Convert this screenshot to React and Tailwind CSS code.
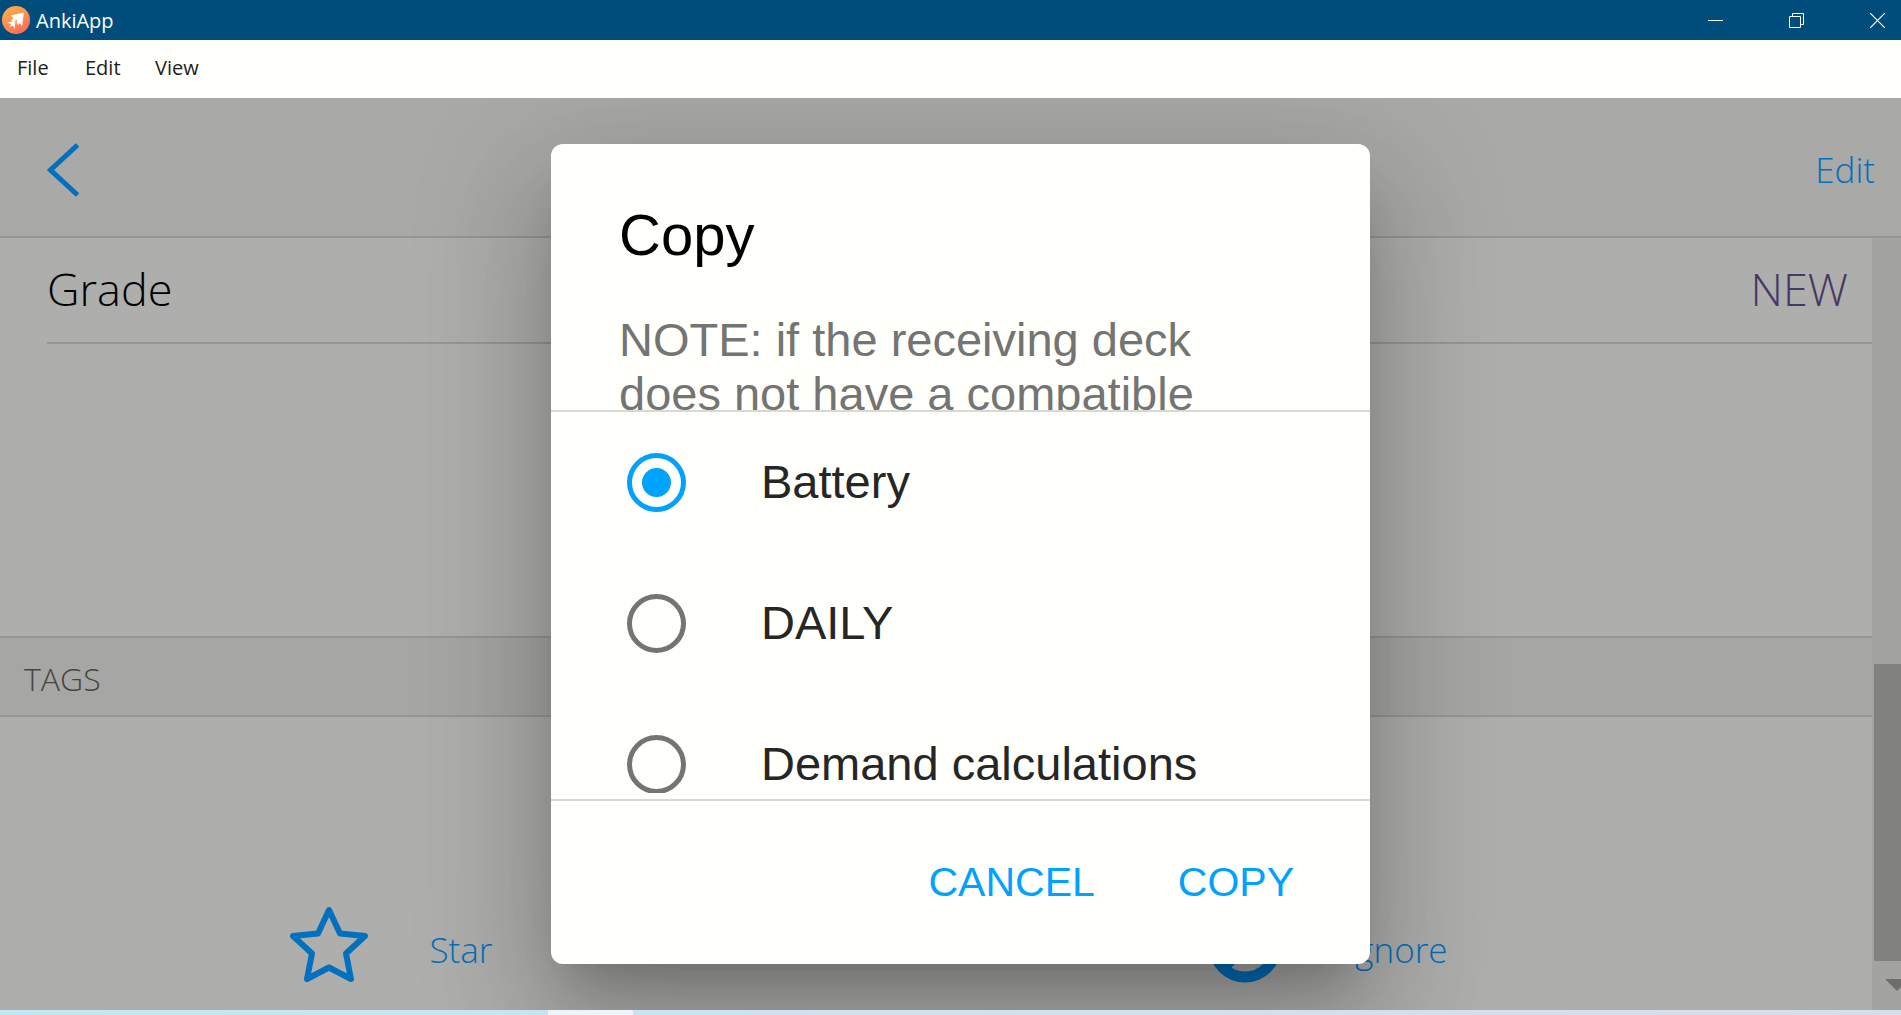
import { useState } from "react"

const DECKS = ["Battery", "DAILY", "Demand calculations"]

const MENU = [
  { label: "File", className: "w-[68px]" },
  { label: "Edit", className: "w-[70px]" },
  { label: "View", className: "w-[80px]" },
]

function Logo() {
  return (
    <svg className="h-7 w-7" viewBox="0 0 28 28" aria-hidden="true">
      <defs>
        <linearGradient id="logo" x1="0" y1="0" x2="0.6" y2="1">
          <stop offset="0" stopColor="#ffb648" />
          <stop offset="1" stopColor="#fb6f55" />
        </linearGradient>
      </defs>
      <circle cx="14" cy="14" r="14" fill="url(#logo)" />
      <path d="M22 6.500 L8 9.500 L11.500 12 L9 14.500 L11 16 L15 13.500 L14.500 17 L16 19 L18 17 L20 20.500 Z" fill="#fffefa" />
      <path d="M5 16.500 L13.500 15 L12.500 23 L11 19.500 L8 21 L9 18 Z" fill="#fffefa" />
    </svg>
  )
}

function TitleBar() {
  return (
    <header className="flex h-10 shrink-0 items-center justify-between bg-[#004d7b] pl-0.5 pr-4 text-white">
      <div className="flex items-center gap-1.5">
        <Logo />
        <h1 className="pt-0.5 text-[20px] leading-7">AnkiApp</h1>
      </div>
      <div className="flex items-center gap-[66px]">
        <button type="button" aria-label="Minimize">
          <svg className="block h-[15px] w-[15px]" viewBox="0 0 15 15" stroke="currentColor">
            <path d="M0 7.5H15" />
          </svg>
        </button>
        <button type="button" aria-label="Restore">
          <svg className="block h-[15px] w-[15px]" viewBox="0 0 15 15" fill="none" stroke="currentColor">
            <path d="M0.5 3.5H11.5V14.5H0.5Z M3.5 3.5V0.5H14.5V11.5H11.5" />
          </svg>
        </button>
        <button type="button" aria-label="Close">
          <svg className="block h-[15px] w-[15px]" viewBox="0 0 15 15" stroke="currentColor" strokeWidth="1.2">
            <path d="M0 0L15 15M15 0L0 15" />
          </svg>
        </button>
      </div>
    </header>
  )
}

function MenuBar() {
  return (
    <nav className="flex h-[58px] shrink-0 items-center bg-[#fffffc] pb-0.5 pl-[17px] text-[20px] text-[#1c1c1c]">
      {MENU.map((item) => (
        <button key={item.label} type="button" className={`text-left ${item.className}`}>
          {item.label}
        </button>
      ))}
    </nav>
  )
}

function StarIcon() {
  return (
    <svg className="h-[78px] w-[78px]" viewBox="0 0 78 78" fill="none" stroke="currentColor" strokeWidth="6" strokeLinejoin="round" aria-hidden="true">
      <path d="M39 4 L50 27.500 L75 30 L56 47.500 L61 73 L39 61.500 L17 73 L22 47.500 L3 30 L28 27.500 Z" />
    </svg>
  )
}

function IgnoreIcon() {
  return (
    <svg className="h-[78px] w-[78px]" viewBox="0 0 78 78" fill="none" stroke="currentColor" strokeWidth="11" aria-hidden="true">
      <circle cx="39" cy="40" r="31" />
      <path d="M18 61L60 19" />
    </svg>
  )
}

/** Card detail screen, dimmed while the dialog is open. */
function CardScreen() {
  return (
    <main className="flex min-h-0 flex-1 flex-col font-light">
      <div className="flex h-[140px] shrink-0 items-center justify-between border-b-2 border-[#969694] bg-[#a9a9a7] pl-[47px] pr-[26px] pt-1.5 text-[#0070bf]">
        <button type="button" aria-label="Back">
          <svg className="block h-[54px] w-8" viewBox="0 0 32 54" fill="none" stroke="currentColor" strokeWidth="5">
            <path d="M30.500 2L3.500 27L30.500 52" />
          </svg>
        </button>
        <button type="button" className="text-[35px]">Edit</button>
      </div>
      <div className="flex min-h-0 flex-1">
        <div className="flex min-w-0 flex-1 flex-col bg-[#aeaeac]">
          <section className="h-[400px] shrink-0 border-b-2 border-[#969694] pl-[47px]">
            <dl className="flex h-[106px] items-center justify-between border-b-2 border-[#969694] pb-0.5 pr-6 text-[45px]">
              <dt className="text-black">Grade</dt>
              <dd className="text-[#463866]">NEW</dd>
            </dl>
          </section>
          <h2 className="flex h-[79px] shrink-0 items-center border-b-2 border-[#969694] bg-[#a6a6a4] pl-6 pt-1 text-[32px] text-[#454543]">
            TAGS
          </h2>
          <div className="grid flex-1 grid-cols-2 items-end pb-[26px] text-[35px] text-[#0070bf]">
            <button type="button" className="flex items-center justify-center gap-[62px] pr-[154px]">
              <StarIcon />
              <span className="pt-2.5">Star</span>
            </button>
            <button type="button" className="flex items-center justify-center gap-[62px] pr-[154px]">
              <IgnoreIcon />
              <span className="pt-2.5">Ignore</span>
            </button>
          </div>
        </div>
        <div className="flex w-[29px] shrink-0 flex-col items-end justify-end bg-[#a3a3a1]" aria-hidden="true">
          <div className="h-[297px] w-[27px] bg-[#828280]" />
          <svg className="mb-[19px] mt-[18px] h-3 w-4" viewBox="0 0 16 12" fill="#6d6d6b">
            <path d="M0 0H24L12 12Z" />
          </svg>
        </div>
      </div>
    </main>
  )
}

function CopyDialog() {
  const [deck, setDeck] = useState(DECKS[0])

  return (
    <form
      role="dialog"
      aria-labelledby="copy-title"
      className="flex h-[820px] w-[819px] flex-col rounded-xl bg-[#fffffc] font-['Liberation_Sans',Arial,sans-serif] shadow-[0_32px_44px_-20px_rgba(0,0,0,0.2),0_70px_111px_9px_rgba(0,0,0,0.14),0_26px_135px_23px_rgba(0,0,0,0.12)]"
      onSubmit={(e) => e.preventDefault()}
    >
      <div className="h-[268px] shrink-0 overflow-hidden border-b-2 border-[#d8d8d6] px-[68px] pt-14">
        <h2 id="copy-title" className="text-[58px] leading-[70px] text-black">Copy</h2>
        <p className="mt-[43px] text-[47px] leading-[54px] text-[#747472]">
          NOTE: if the receiving deck does not have a compatible
        </p>
      </div>
      <fieldset className="flex-1 overflow-hidden border-b-2 border-[#d8d8d6] pb-1.5">
        <div className="h-[381px] overflow-hidden">
          {DECKS.map((name) => (
            <label key={name} className="flex h-[141px] items-center gap-[75px] pl-[76px] text-[47px] text-[#262626]">
              <input
                type="radio"
                name="deck"
                checked={deck === name}
                onChange={() => setDeck(name)}
                className="grid h-[59px] w-[59px] appearance-none place-items-center rounded-full border-[5px] border-[#747472] checked:border-[#00a2ff] checked:before:h-[29px] checked:before:w-[29px] checked:before:rounded-full checked:before:bg-[#00a2ff] checked:before:content-['']"
              />
              {name}
            </label>
          ))}
        </div>
      </fieldset>
      <div className="flex h-[163px] shrink-0 items-center justify-end gap-[83px] pr-[76px] text-[41px] text-[#00a2ff]">
        <button type="button">CANCEL</button>
        <button type="submit">COPY</button>
      </div>
    </form>
  )
}

export default function App() {
  return (
    <div className="flex h-screen flex-col overflow-hidden font-['Open_Sans','Noto_Sans',sans-serif]">
      <TitleBar />
      <MenuBar />
      <div className="relative flex min-h-0 flex-1 flex-col overflow-hidden">
        <CardScreen />
        <div className="absolute inset-0 flex items-center justify-center pl-5">
          <CopyDialog />
        </div>
      </div>
      <div className="h-[5px] shrink-0 bg-linear-to-r from-[#c3e6f3] to-[#d5deeb] pl-[548px]">
        <div className="h-full w-[85px] bg-[#e9f6fb]" />
      </div>
    </div>
  )
}
